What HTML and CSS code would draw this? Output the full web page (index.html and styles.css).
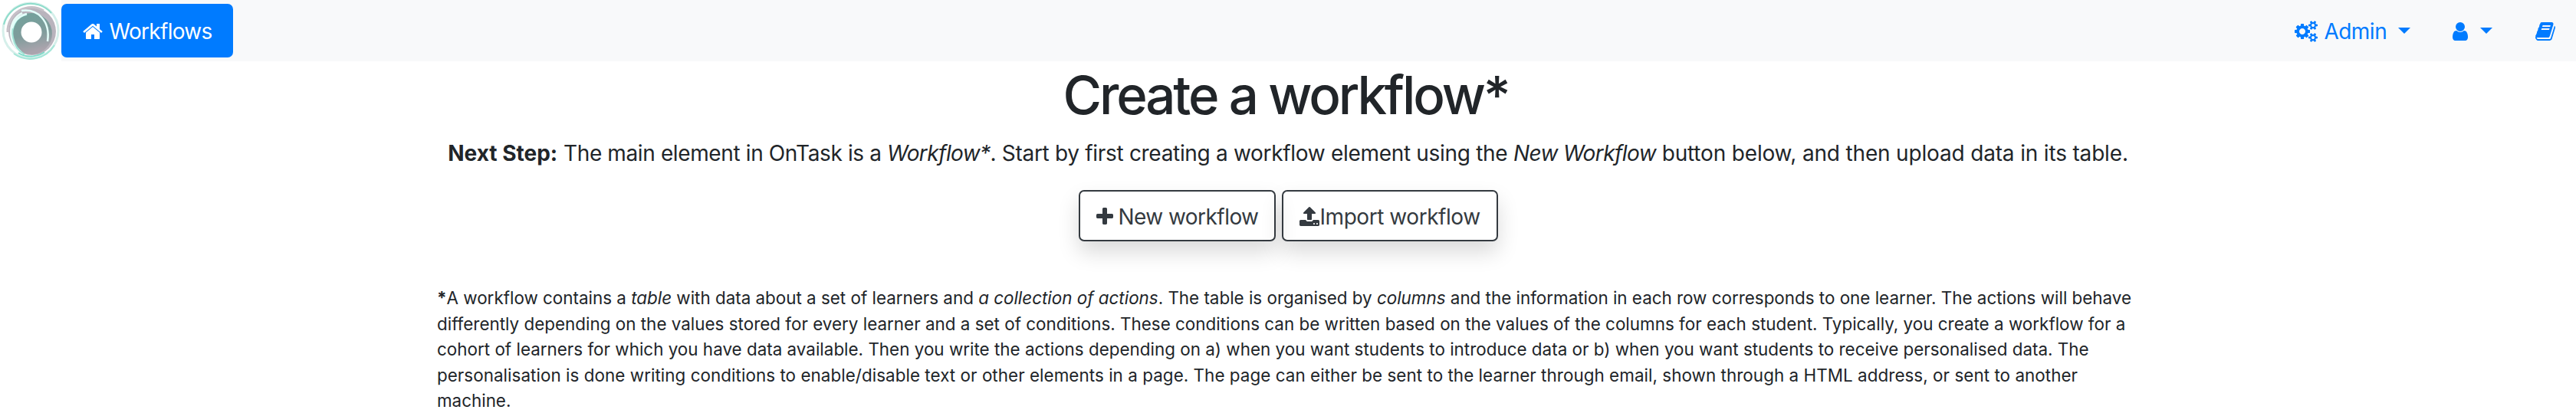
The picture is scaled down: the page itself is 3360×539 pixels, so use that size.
FILE: index.html
```html
<!DOCTYPE html>
<html lang="en">
<head>
<meta charset="utf-8">
<title>OnTask</title>
<link rel="stylesheet" href="styles.css">
</head>
<body>
<nav class="navbar">
  <a class="brand"><svg class="logo" viewBox="0 0 80 80">
    <defs>
      <linearGradient id="disc" x1="0" y1="0" x2="0.25" y2="1"><stop offset="0" stop-color="#71a29c"/><stop offset=".6" stop-color="#7f9c9b"/><stop offset="1" stop-color="#aaa4ad"/></linearGradient>
      <filter id="soft" x="-20%" y="-20%" width="140%" height="140%"><feGaussianBlur stdDeviation=".7"/></filter>
    </defs>
    <rect width="80" height="80" fill="#fff"/>
    <g filter="url(#soft)" fill="none">
      <circle cx="40" cy="40" r="36" stroke="#d5efea" stroke-width="3"/>
      <path d="M5 32A36 36 0 0 1 67 17" stroke="#8edccb" stroke-width="2"/>
      <path d="M71 59A37 37 0 0 1 18 70" stroke="#a4e6d8" stroke-width="2"/>
      <circle cx="42" cy="41" r="31" fill="#b9b4bd"/>
      <circle cx="41" cy="44" r="27" fill="url(#disc)"/>
      <path d="M10 42A31 31 0 0 1 57 14" stroke="#c6c1c8" stroke-width="3"/>
      <path d="M29 17C10 26 10 54 27 68" stroke="#e9fbf7" stroke-width="3"/>
      <path d="M35 19C21 21 14 37 17 49C19 60 25 67 32 71" stroke="#9fe3d5" stroke-width="2"/>
      <path d="M35 18C24 21 18 28 16 37" stroke="#e4fffa" stroke-width="2.5"/>
      <path d="M28 14C49 11 66 27 62 54" stroke="#e4fffa" stroke-width="2.5"/>
      <path d="M24 69C36 77 51 73 58 68" stroke="#7edcca" stroke-width="2"/>
      <circle cx="41" cy="42" r="13.5" fill="#fff"/>
    </g>
  </svg></a>
  <a class="home"><svg class="icon" viewBox="0 0 1792 1792"><path d="M1472 992v480q0 26-19 45t-45 19h-384v-384h-256v384h-384q-26 0-45-19t-19-45v-480q0-1 .5-3t.5-3l575-474 575 474q1 2 1 6zm223-69l-62 74q-8 9-21 11h-3q-13 0-21-7l-692-577-692 577q-12 8-24 7-13-2-21-11l-62-74q-8-10-7-23.5t11-21.5l719-599q32-26 76-26t76 26l244 204v-195q0-14 9-23t23-9h192q14 0 23 9t9 23v408l219 182q10 8 11 21.5t-7 23.5z"/></svg><span class="label">Workflows</span></a>
  <div class="menu">
    <a class="item admin"><svg class="icon cogs" viewBox="0 0 1920 1792"><path d="M896 896q0-106-75-181t-181-75-181 75-75 181 75 181 181 75 181-75 75-181zm768 512q0-52-38-90t-90-38-90 38-38 90q0 53 37.5 90.5t90.5 37.5 90.5-37.5 37.5-90.5zm0-1024q0-52-38-90t-90-38-90 38-38 90q0 53 37.5 90.5t90.5 37.5 90.5-37.5 37.5-90.5zm-384 421v185q0 10-7 19.5t-16 10.5l-155 24q-11 35-32 76 34 48 90 115 7 11 7 20 0 12-7 19-23 30-82.5 89.5t-78.5 59.5q-11 0-21-7l-115-90q-37 19-77 31-11 108-23 155-7 24-30 24h-186q-11 0-20-7.5t-10-17.5l-23-153q-34-10-75-31l-118 89q-7 7-20 7-11 0-21-8-144-133-144-160 0-9 7-19 10-14 41-53t47-61q-23-44-35-82l-152-24q-10-1-17-9.5t-7-19.5v-185q0-10 7-19.5t16-10.5l155-24q11-35 32-76-34-48-90-115-7-11-7-20 0-12 7-20 22-30 82-89t79-59q11 0 21 7l115 90q34-18 77-32 11-108 23-154 7-24 30-24h186q11 0 20 7.5t10 17.5l23 153q34 10 75 31l118-89q8-7 20-7 11 0 21 8 144 133 144 160 0 8-7 19-12 16-42 54t-45 60q23 48 34 82l152 23q10 2 17 10.5t7 19.5zm640 533v140q0 16-149 31-12 27-30 52 51 113 51 138 0 4-4 7-122 71-124 71-8 0-46-47t-52-68q-20 2-30 2t-30-2q-14 21-52 68t-46 47q-2 0-124-71-4-3-4-7 0-25 51-138-18-25-30-52-149-15-149-31v-140q0-16 149-31 13-29 30-52-51-113-51-138 0-4 4-7 4-2 35-20t59-34 30-16q8 0 46 46.5t52 67.5q20-2 30-2t30 2q51-71 92-112l6-2q4 0 124 70 4 3 4 7 0 25-51 138 17 23 30 52 149 15 149 31zm0-1024v140q0 16-149 31-12 27-30 52 51 113 51 138 0 4-4 7-122 71-124 71-8 0-46-47t-52-68q-20 2-30 2t-30-2q-14 21-52 68t-46 47q-2 0-124-71-4-3-4-7 0-25 51-138-18-25-30-52-149-15-149-31v-140q0-16 149-31 13-29 30-52-51-113-51-138 0-4 4-7 4-2 35-20t59-34 30-16q8 0 46 46.5t52 67.5q20-2 30-2t30 2q51-71 92-112l6-2q4 0 124 70 4 3 4 7 0 25-51 138 17 23 30 52 149 15 149 31z"/></svg><span class="label">Admin</span><i class="caret"></i></a>
    <a class="item user"><svg class="icon" viewBox="0 0 1792 1792"><path d="M1536 1399q0 109-62.5 187t-150.5 78h-854q-88 0-150.5-78t-62.5-187q0-85 8.5-160.5t31.5-152 58.5-131 94-89 134.5-34.5q131 128 313 128t313-128q76 0 134.5 34.5t94 89 58.5 131 31.5 152 8.5 160.5zm-256-887q0 159-112.5 271.5t-271.5 112.5-271.5-112.5-112.5-271.5 112.5-271.5 271.5-112.5 271.5 112.5 112.5 271.5z"/></svg><i class="caret"></i></a>
    <a class="item"><svg class="icon" viewBox="0 0 1792 1792"><path d="M1703 478q40 57 18 129l-275 906q-19 64-76.5 107.5t-122.5 43.5h-923q-77 0-148.5-53.5t-99.5-131.5q-24-67-2-127 0-4 3-27t4-37q1-8-3-21.5t-3-19.5q2-11 8-21t16.5-23.5 16.5-23.5q23-38 45-91.5t30-91.5q3-10 .5-30t-.5-28q3-11 17-28t17-23q21-36 42-92t25-90q1-9-2.5-32t.5-28q4-13 22-30.5t22-22.5q19-26 42.5-84.5t27.5-96.5q1-8-3-25.5t-2-26.5q2-8 9-18t18-23 17-21q8-12 16.5-30.5t15-35 16-36 19.5-32 26.5-23.5 36-11.5 47.5 5.5l-1 3q38-9 51-9h761q74 0 114 56t18 130l-274 906q-36 119-71.5 153.5t-128.5 34.5h-869q-27 0-38 15-11 16-1 43 24 70 144 70h923q29 0 56-15.5t35-41.5l300-987q7-22 5-57 38 15 59 43zm-1064 2q-4 13 2 22.5t20 9.5h608q13 0 25.5-9.5t16.5-22.5l21-64q4-13-2-22.5t-20-9.5h-608q-13 0-25.5 9.5t-16.5 22.5zm-83 256q-4 13 2 22.5t20 9.5h608q13 0 25.5-9.5t16.5-22.5l21-64q4-13-2-22.5t-20-9.5h-608q-13 0-25.5 9.5t-16.5 22.5z"/></svg></a>
  </div>
</nav>
<main class="container">
  <h1 class="title">Create a workflow*</h1>
  <p class="lead"><b>Next Step:</b> <span class="intro">The main element in OnTask is a </span><em class="term">Workflow*</em><span class="start">. Start by first creating a workflow element using the </span><em class="term">New Workflow</em><span class="finish"> button below, and then upload data in its table.</span></p>
  <div class="actions">
    <a class="btn new"><svg class="icon" viewBox="0 0 1792 1792"><path d="M1600 736v192q0 40-28 68t-68 28h-416v416q0 40-28 68t-68 28h-192q-40 0-68-28t-28-68v-416h-416q-40 0-68-28t-28-68v-192q0-40 28-68t68-28h416v-416q0-40 28-68t68-28h192q40 0 68 28t28 68v416h416q40 0 68 28t28 68z"/></svg><span class="label">New workflow</span></a>
    <a class="btn import"><svg class="icon" viewBox="0 0 1792 1792"><path d="M1344 1472q0-26-19-45t-45-19-45 19-19 45 19 45 45 19 45-19 19-45zm256 0q0-26-19-45t-45-19-45 19-19 45 19 45 45 19 45-19 19-45zm128-224v320q0 40-28 68t-68 28h-1472q-40 0-68-28t-28-68v-320q0-40 28-68t68-28h427q21 56 70.5 92t110.5 36h256q61 0 110.5-36t70.5-92h427q40 0 68 28t28 68zm-325-648q-17 40-59 40h-256v448q0 26-19 45t-45 19h-256q-26 0-45-19t-19-45v-448h-256q-42 0-59-40-17-39 14-69l448-448q18-19 45-19t45 19l448 448q31 30 14 69z"/></svg><span class="label">Import workflow</span></a>
  </div>
  <p class="note"><b>*</b>A workflow contains a <em>table</em> with data about a set of learners and <em>a collection of actions</em>. The table is organised by <em>columns</em> and the information in each row corresponds to one learner. The actions will behave<br>
  <span class="row2">differently depending on the values stored for every learner and a set of conditions. These conditions can be written based on the values of the columns for each student. Typically, you create a workflow for a</span><br>
  <span class="row3">cohort of learners for which you have data available. Then you write the actions depending on a) when you want students to introduce data or b) when you want students to receive personalised data. The</span><br>
  <span class="row4">personalisation is done writing conditions to enable/disable text or other elements in a page. The page can either be sent to the learner through email, shown through a HTML address, or sent to another</span><br>
  machine.</p>
</main>
</body>
</html>
```
FILE: styles.css
```css
* { box-sizing: border-box; }
body { margin: 0; overflow: hidden; background: #fff; color: #212529; font: 28px/42px "Inter", "Liberation Sans", sans-serif; }
.icon { display: block; width: 28px; height: 28px; fill: currentColor; flex: none; }
.cogs { width: 30px; }
.label { padding-top: 2px; }
.navbar { display: flex; align-items: center; height: 80px; background: #f8f9fa; }
.brand, .logo { display: block; width: 80px; height: 80px; }
.home { display: flex; align-items: center; width: 224px; height: 70px; padding-left: 27px; gap: 7.5px; border-radius: 7px; background: #007bff; color: #fff; letter-spacing: -0.7px; }
.home .icon, .item .icon { margin-top: 2px; }
.menu { display: flex; align-items: center; margin-left: auto; padding-right: 26.5px; color: #007bff; }
.item { display: flex; align-items: center; }
.admin { gap: 8.5px; margin-right: 51px; letter-spacing: -0.5px; }
.admin .caret { margin-left: 5.8px; }
.user { gap: 12px; margin-right: 55px; }
.caret { width: 16px; height: 8px; border: 8px solid transparent; border-top-color: currentColor; border-bottom: 0; }
.container { width: 2280px; margin: 0 auto; padding: 0 30px; }
.title { margin: 0; padding: 2px 6px 0 0; font-size: 69px; line-height: 84px; font-weight: 500; text-align: center; letter-spacing: -3.1px; }
.lead { margin: 13px 0 0; text-align: center; white-space: nowrap; }
.intro { letter-spacing: -0.38px; }
.term { letter-spacing: -0.6px; }
.start { letter-spacing: -0.31px; }
.finish { letter-spacing: -0.17px; }
.actions { display: flex; justify-content: center; gap: 8px; margin-top: 27px; }
.btn { display: flex; align-items: center; height: 67px; border: 2px solid #343a40; border-radius: 7px; color: #343a40; box-shadow: 0 14px 28px rgba(0, 0, 0, .15); }
.btn .icon { margin-top: 2px; }
.new { width: 257px; padding-left: 18px; gap: 4px; letter-spacing: -0.55px; }
.import { width: 282px; padding-left: 20px; letter-spacing: -0.45px; }
.note { margin: 57px 0 0; font-size: 22.4px; line-height: 33.6px; white-space: nowrap; }
.row2, .row3 { letter-spacing: 0.015px; }
.row4 { letter-spacing: 0.055px; }
```
